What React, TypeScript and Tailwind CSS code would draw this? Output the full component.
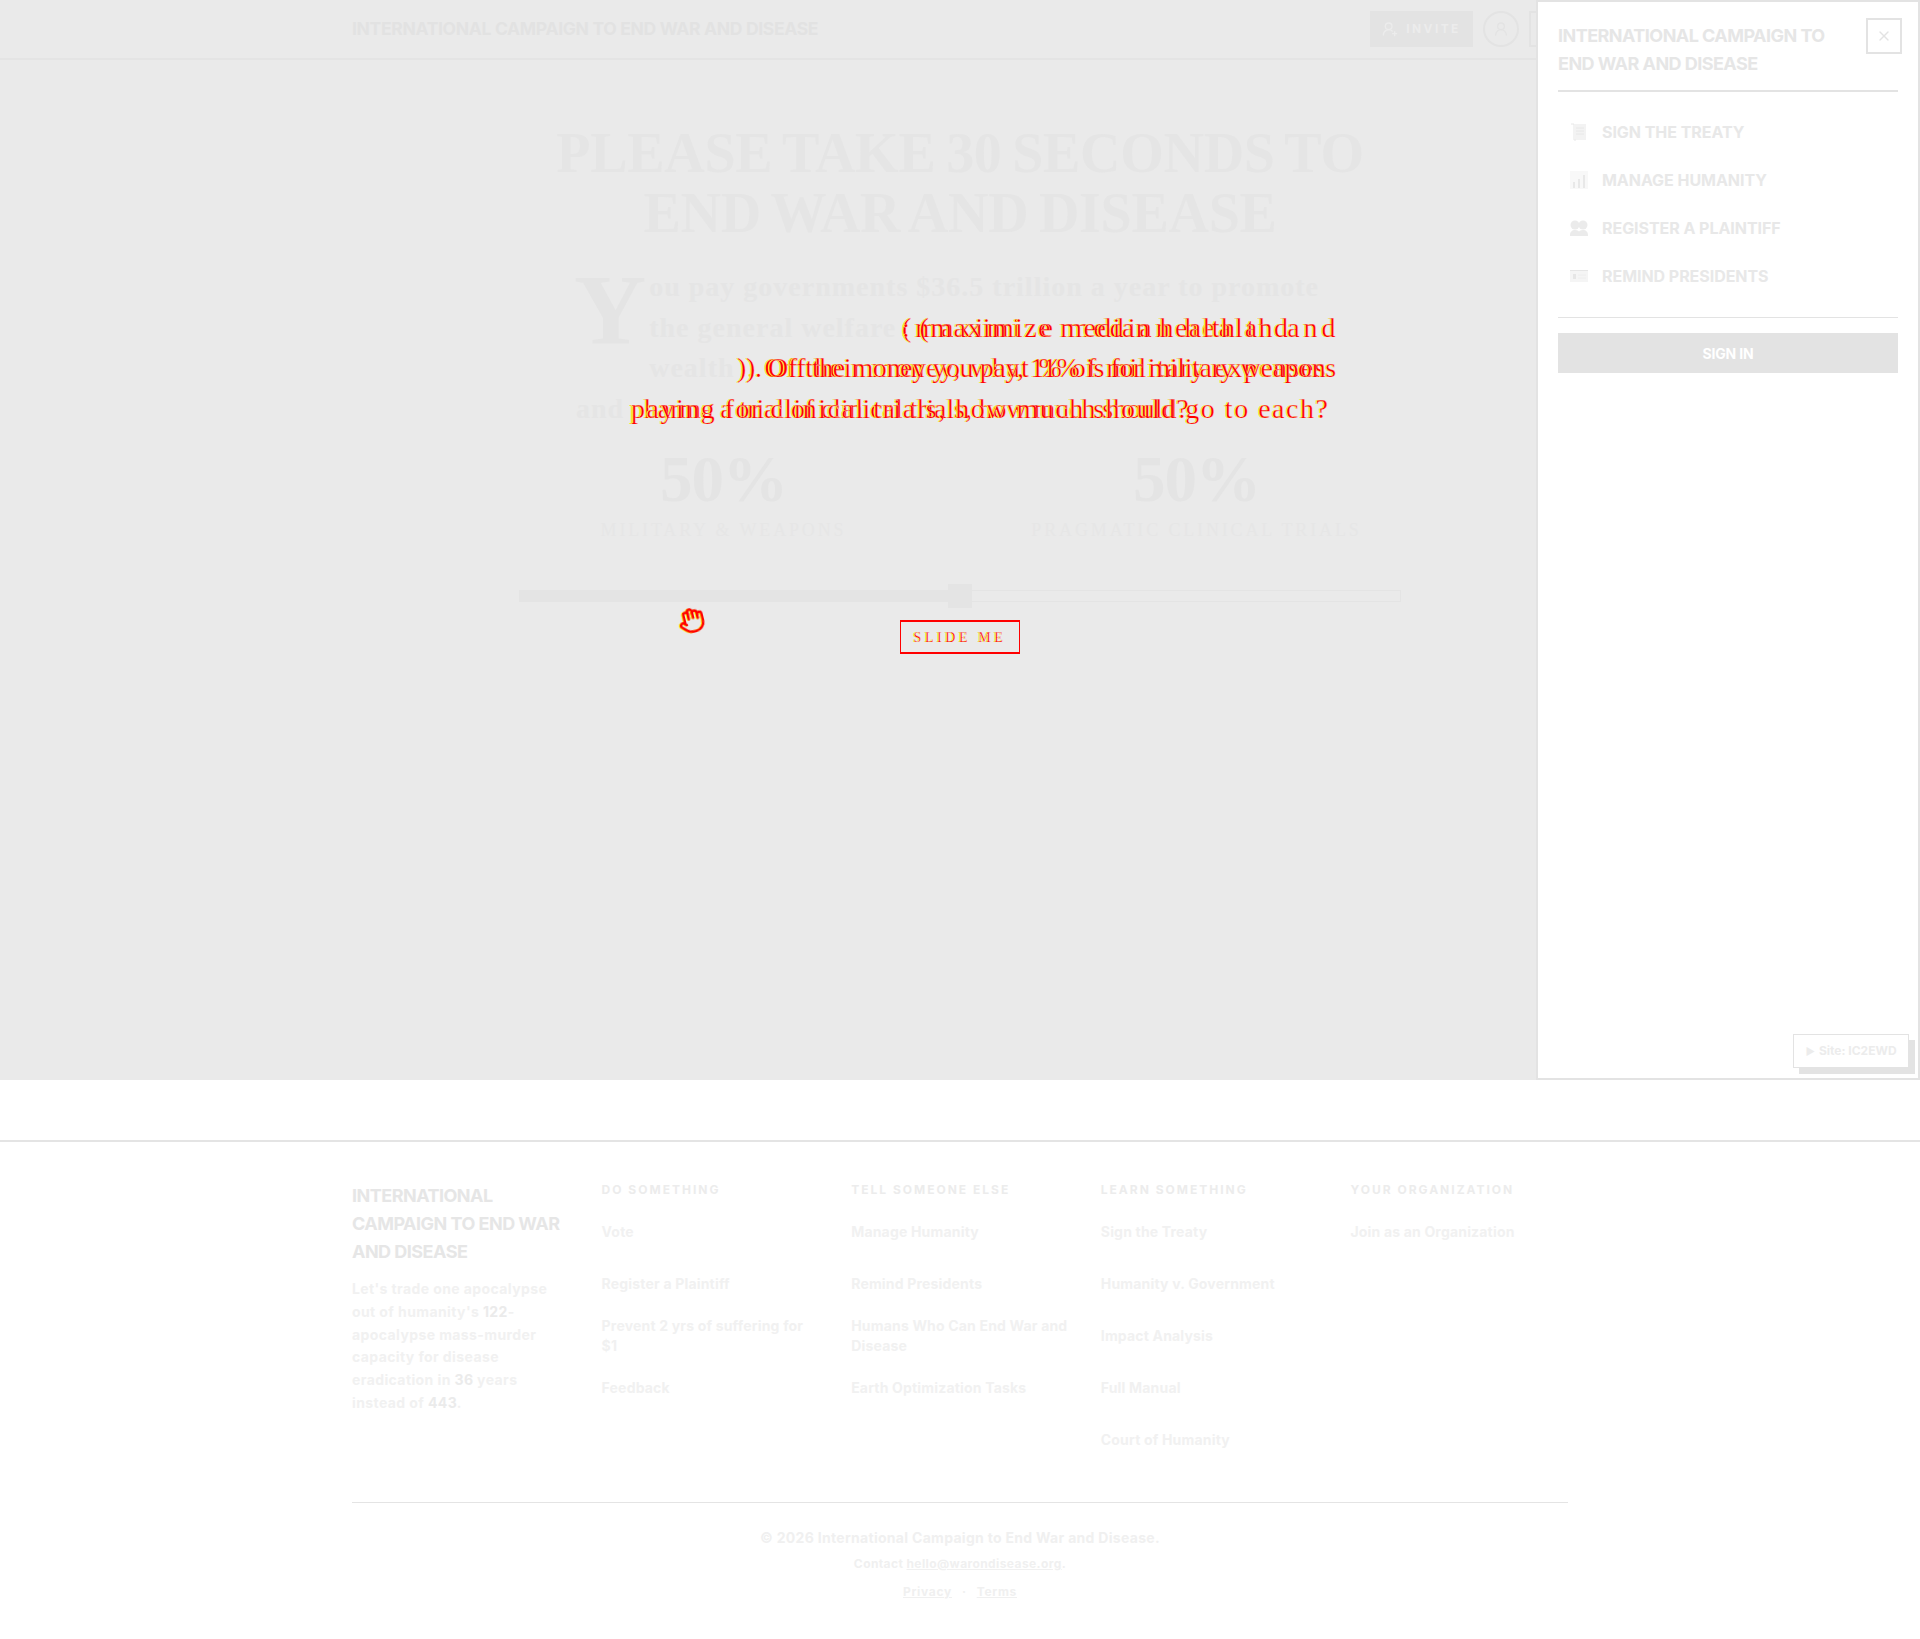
import { Hand, UserRoundPlus, UserRound, X } from "lucide-react"

const serif = "font-['Liberation_Serif',serif]"
const redText = "text-[#ff0000] [text-shadow:-1px_0_0_#ffff00] [-webkit-text-stroke:0.25px_#eaeaea] font-normal"

const footerColumns = [
  { title: "DO SOMETHING", links: ["Vote", "Register a Plaintiff", "Prevent 2 yrs of suffering for $1", "Feedback"] },
  { title: "TELL SOMEONE ELSE", links: ["Manage Humanity", "Remind Presidents", "Humans Who Can End War and Disease", "Earth Optimization Tasks"] },
  { title: "LEARN SOMETHING", links: ["Sign the Treaty", "Humanity v. Government", "Impact Analysis", "Full Manual", "Court of Humanity"] },
  { title: "YOUR ORGANIZATION", links: ["Join as an Organization"] },
]

function ScrollIcon() {
  return (
    <svg width="20" height="20" viewBox="0 0 20 20" fill="none">
      <rect x="4" y="2" width="13" height="16" fill="#f3f3f3" />
      <path d="M2 2h3M5 18h2M7 6h8M7 9h8M7 12h8" stroke="#e8e8e8" strokeWidth="1" />
    </svg>
  )
}

function ChartIcon() {
  return (
    <svg width="20" height="20" viewBox="0 0 20 20" fill="none">
      <rect x="1" y="1" width="18" height="18" fill="#f8f8f8" />
      <path d="M5 18v-6M10 18v-9M15 18v-13" stroke="#e8e8e8" strokeWidth="2" />
    </svg>
  )
}

function PeopleIcon() {
  return (
    <svg width="20" height="20" viewBox="0 0 20 20" fill="#ebebeb">
      <circle cx="6" cy="7" r="4.5" />
      <circle cx="14" cy="7" r="4.5" />
      <path d="M1 17c0-3 2-5 5-5s4 1 4 2c0-1 1-2 4-2s5 2 5 5v1H1z" />
    </svg>
  )
}

function CardIcon() {
  return (
    <svg width="20" height="20" viewBox="0 0 20 20" fill="none">
      <rect x="1" y="4" width="18" height="12" fill="#f5f5f5" />
      <path d="M1 4.500h18" stroke="#e6e6e6" strokeWidth="1" />
      <rect x="4" y="8" width="3" height="5" fill="#e6e6e6" />
      <path d="M9 9h8M9 12h8" stroke="#eeeeee" strokeWidth="1" />
    </svg>
  )
}

const panelItems = [
  { label: "SIGN THE TREATY", icon: <ScrollIcon /> },
  { label: "MANAGE HUMANITY", icon: <ChartIcon /> },
  { label: "REGISTER A PLAINTIFF", icon: <PeopleIcon /> },
  { label: "REMIND PRESIDENTS", icon: <CardIcon /> },
]

function Header() {
  return (
    <header className="h-[60px] border-b-2 border-[#e4e4e4]">
      <div className="mx-auto w-[1216px] h-[58px] flex items-center justify-between">
        <span className="text-[17.500px] leading-[28px] font-bold tracking-[-0.320px] text-[#e2e2e2]">
          INTERNATIONAL CAMPAIGN TO END WAR AND DISEASE
        </span>
        <div className="flex items-center gap-[10px]">
          <div className="w-[103px] h-[36px] bg-[#e3e3e3] flex items-center justify-center gap-2 text-[#ececec]">
            <UserRoundPlus size={16} />
            <span className="text-[12px] font-bold tracking-[2.400px]">INVITE</span>
          </div>
          <div className="w-[36px] h-[36px] rounded-full border-2 border-[#e3e3e3] flex items-center justify-center text-[#e3e3e3]">
            <UserRound size={16} />
          </div>
          <div className="w-[39px] h-[36px] border-2 border-[#e3e3e3]" />
        </div>
      </div>
    </header>
  )
}

function Paragraph() {
  return (
    <div className={`relative mx-auto mt-6 w-[768px] h-[162px] ${serif} text-[28px] leading-[40.500px] font-bold tracking-[1px] text-[#e5e5e5] whitespace-nowrap`}>
      <span className="float-left -ml-[2px] text-[100px] leading-[86px] font-bold mr-[2px] text-[#e4e4e4]">Y</span>
      <div>ou pay governments $36.5 trillion a year to promote</div>
      <div className="relative">
        the general welfare
        <span className={`absolute left-[326px] top-0 ${redText} tracking-[3.900px]`}>(maximize median health and</span>
        <span className={`absolute left-[326px] top-0 ${redText} tracking-[1.400px]`}>: (maximize median health and</span>
      </div>
      <div className="relative">
        wealth
        <span className={`absolute left-[161px] top-0 ${redText} tracking-[1.400px]`}>). Of their money, what % of military expenses</span>
        <span className={`absolute left-[170px] top-0 ${redText} tracking-[-0.400px]`}>). Off the money you pay, 11% is for military weapons</span>
      </div>
      <div className="relative">
        and
        <span className={`absolute left-[54px] top-0 ${redText} tracking-[-0.100px]`}>pharma a trial of clinical trials, how much should?</span>
        <span className={`absolute left-[55px] top-0 ${redText} tracking-[1.500px]`}>paying for clinical trials, how much should go to each?</span>
      </div>
    </div>
  )
}

function Allocation() {
  return (
    <div className={`mx-auto mt-[12px] w-[946px] grid grid-cols-2 text-center ${serif} text-[#e4e4e4]`}>
      <div>
        <div className="text-[65px] leading-[77px] font-bold tracking-[-1px]">50%</div>
        <div className="text-[18px] leading-[24px] tracking-[2.850px] text-[#e6e6e6]">MILITARY &amp; WEAPONS</div>
      </div>
      <div>
        <div className="text-[65px] leading-[77px] font-bold tracking-[-1px]">50%</div>
        <div className="text-[18px] leading-[24px] tracking-[2.850px] text-[#e6e6e6]">PRAGMATIC CLINICAL TRIALS</div>
      </div>
    </div>
  )
}

function Slider() {
  return (
    <div className="mx-auto mt-[42px] w-[882px]">
      <div className="relative h-[24px] flex items-center">
        <div className="w-1/2 h-[12px] bg-[#e4e4e4]" />
        <div className="w-1/2 h-[12px] border border-[#e4e4e4]" />
        <div className="absolute left-[429px] top-0 w-[24px] h-[24px] bg-[#e4e4e4]" />
        <Hand size={27} strokeWidth={2.200} className="absolute left-[159px] top-[23px] -rotate-[14deg] text-[#ff0000] [filter:drop-shadow(-1px_0_0_#ffff00)]" />
      </div>
      <div className="mt-[12px] flex justify-center">
        <div className={`w-[120px] h-[34px] border border-y-2 border-[#ff0000] flex items-center justify-center ${serif} text-[14px] tracking-[3.600px] ${redText}`}>
          SLIDE ME
        </div>
      </div>
    </div>
  )
}

function SidePanel() {
  return (
    <aside className="absolute top-0 right-0 w-[384px] h-[1080px] bg-white border-2 border-[#e3e3e3] px-5">
      <div className="pt-[20px] h-[90px] border-b-2 border-[#e3e3e3]">
        <div className="text-[18px] leading-[28px] font-bold tracking-[-0.540px] text-[#e6e6e6] w-[290px]">
          INTERNATIONAL CAMPAIGN TO END WAR AND DISEASE
        </div>
      </div>
      <div className="absolute top-[16px] right-[16px] w-[36px] h-[36px] border-2 border-[#e3e3e3] flex items-center justify-center text-[#e3e3e3]">
        <X size={16} />
      </div>
      <nav className="pt-[16px] pb-[17px] border-b border-[#e3e3e3]">
        {panelItems.map((item) => (
          <div className="h-[48px] flex items-center gap-[13px] pl-[11px]" key={item.label}>
            {item.icon}
            <span className="text-[16px] font-bold tracking-[-0.050px] text-[#e8e8e8]">{item.label}</span>
          </div>
        ))}
      </nav>
      <div className="mt-[15px] h-[40px] bg-[#e3e3e3] flex items-center justify-center text-white text-[14px] font-bold tracking-[-0.200px]">
        SIGN IN
      </div>
      <div className="absolute right-[9px] bottom-[10px] w-[116px] h-[34px] bg-white border border-[#e3e3e3] shadow-[6px_6px_0_#e3e3e3] flex items-center justify-center gap-1 text-[12px] font-bold text-[#ececec]">
        <span className="text-[10px]">▶</span>
        <span>Site: IC2EWD</span>
      </div>
    </aside>
  )
}

function Footer() {
  return (
    <footer className="mt-[60px] border-t-2 border-[#e4e4e4] h-[498px]">
      <div className="mx-auto w-[1216px] pt-[40px]">
        <div className="h-[320px] grid grid-cols-5 gap-8">
          <div>
            <h3 className="text-[18px] leading-[28px] font-bold tracking-[-0.520px] text-[#e6e6e6]">
              INTERNATIONAL CAMPAIGN TO END WAR AND DISEASE
            </h3>
            <p className="mt-3 text-[14px] leading-[22.750px] font-bold tracking-[0.400px] text-[#f1f1f1]">
              Let's trade one apocalypse out of humanity's <span className="text-[#ebebeb]">122</span>-apocalypse mass-murder capacity for disease eradication in <span className="text-[#ebebeb]">36</span> years instead of <span className="text-[#ebebeb]">443</span>.
            </p>
          </div>
          {footerColumns.map((column) => (
            <div key={column.title}>
              <h4 className="text-[12px] leading-[16px] font-bold tracking-[2px] text-[#ececec] mb-3">{column.title}</h4>
              <ul className="space-y-2">
                {column.links.map((link) => (
                  <li className="min-h-[44px] flex items-center text-[14px] leading-[20px] font-bold tracking-[0.180px] text-[#f1f1f1]" key={link}>
                    {link}
                  </li>
                ))}
              </ul>
            </div>
          ))}
        </div>
        <div className="border-t border-[#e4e4e4] pt-[25px] text-center font-bold text-[#f0f0f0]">
          <p className="text-[14px] leading-[20px] tracking-[0.300px]">© 2026 International Campaign to End War and Disease.</p>
          <p className="mt-[6px] text-[12px] leading-[20px] tracking-[0.400px]">
            Contact <span className="underline">hello@warondisease.org</span>.
          </p>
          <p className="mt-2 text-[12px] leading-[20px] tracking-[0.700px] flex justify-center gap-[10px]">
            <span className="underline">Privacy</span>
            <span>·</span>
            <span className="underline">Terms</span>
          </p>
        </div>
      </div>
    </footer>
  )
}

export default function App() {
  return (
    <div className="relative w-[1920px] h-[1639px] bg-white font-['Inter',sans-serif] overflow-hidden">
      <div className="h-[1080px] bg-[#eaeaea]">
        <Header />
        <h1 className={`mt-[63px] text-center ${serif} text-[56px] leading-[60px] font-bold tracking-[-0.300px] [word-spacing:-3px] text-[#e5e5e5]`}>
          PLEASE TAKE 30 SECONDS TO<br />END WAR AND DISEASE
        </h1>
        <Paragraph />
        <Allocation />
        <Slider />
      </div>
      <SidePanel />
      <Footer />
    </div>
  )
}
